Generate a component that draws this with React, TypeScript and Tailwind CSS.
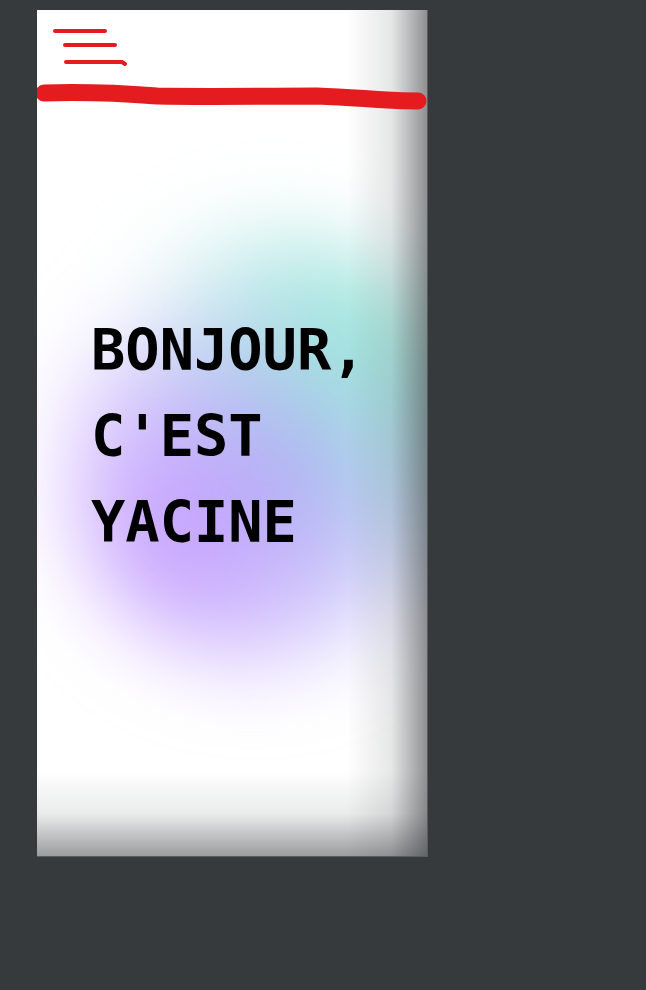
import React from "react";

export default function App() {
  return (
    <div className="min-h-[990px] w-[646px] bg-[#363a3d] pt-[10px] pl-[37px]">
      <div className="relative w-[391px] h-[847px] bg-white overflow-hidden border-r border-b border-[#5a5e60]">
        {/* blob */}
        <div
          className="absolute left-[30px] top-[215px] w-[390px] h-[450px] rounded-full blur-[40px]"
          style={{
            background:
              "radial-gradient(circle at 28% 68%, #c59cff 0%, rgba(197,156,255,0) 55%), radial-gradient(circle at 78% 25%, #98e6d8 0%, rgba(152,230,216,0) 55%), radial-gradient(circle at 58% 52%, #a0acf4 0%, rgba(160,172,244,0) 72%)",
          }}
        />
        {/* shade overlays */}
        <div className="pointer-events-none absolute right-0 top-0 bottom-0 w-[80px] bg-gradient-to-r from-[rgba(54,58,61,0)] via-[rgba(54,58,61,0.12)] via-55% to-[rgba(54,58,61,0.56)]" />
        <div className="pointer-events-none absolute left-0 right-0 bottom-0 h-[85px] bg-gradient-to-b from-[rgba(54,58,61,0)] via-[rgba(54,58,61,0.1)] via-50% to-[rgba(54,58,61,0.5)]" />
        {/* header */}
        <div className="relative h-[110px]">
          <svg className="absolute left-0 top-0" width="391" height="110" viewBox="0 0 391 110">
            <g stroke="#e51c1f" strokeLinecap="round" fill="none">
              <path d="M18 21 L68 21" strokeWidth="4" />
              <path d="M28 35 L78 35" strokeWidth="4" />
              <path d="M29 52 L85 52 L88 54" strokeWidth="4" />
              <path
                d="M7 83 C40 82 80 83 120 86 C170 87 230 86 280 86 C310 87 330 89 350 90 C365 91 375 91 381 91"
                strokeWidth="17"
              />
            </g>
          </svg>
        </div>
        {/* title */}
        <div className="relative pl-[54px] pt-[187px]">
          <h1
            className="text-[57px] font-bold leading-[86px] text-black"
            style={{ fontFamily: '"DejaVu Sans Mono", "Liberation Mono", monospace' }}
          >
            BONJOUR,
            <br />
            C'EST
            <br />
            YACINE
          </h1>
        </div>
      </div>
    </div>
  );
}
